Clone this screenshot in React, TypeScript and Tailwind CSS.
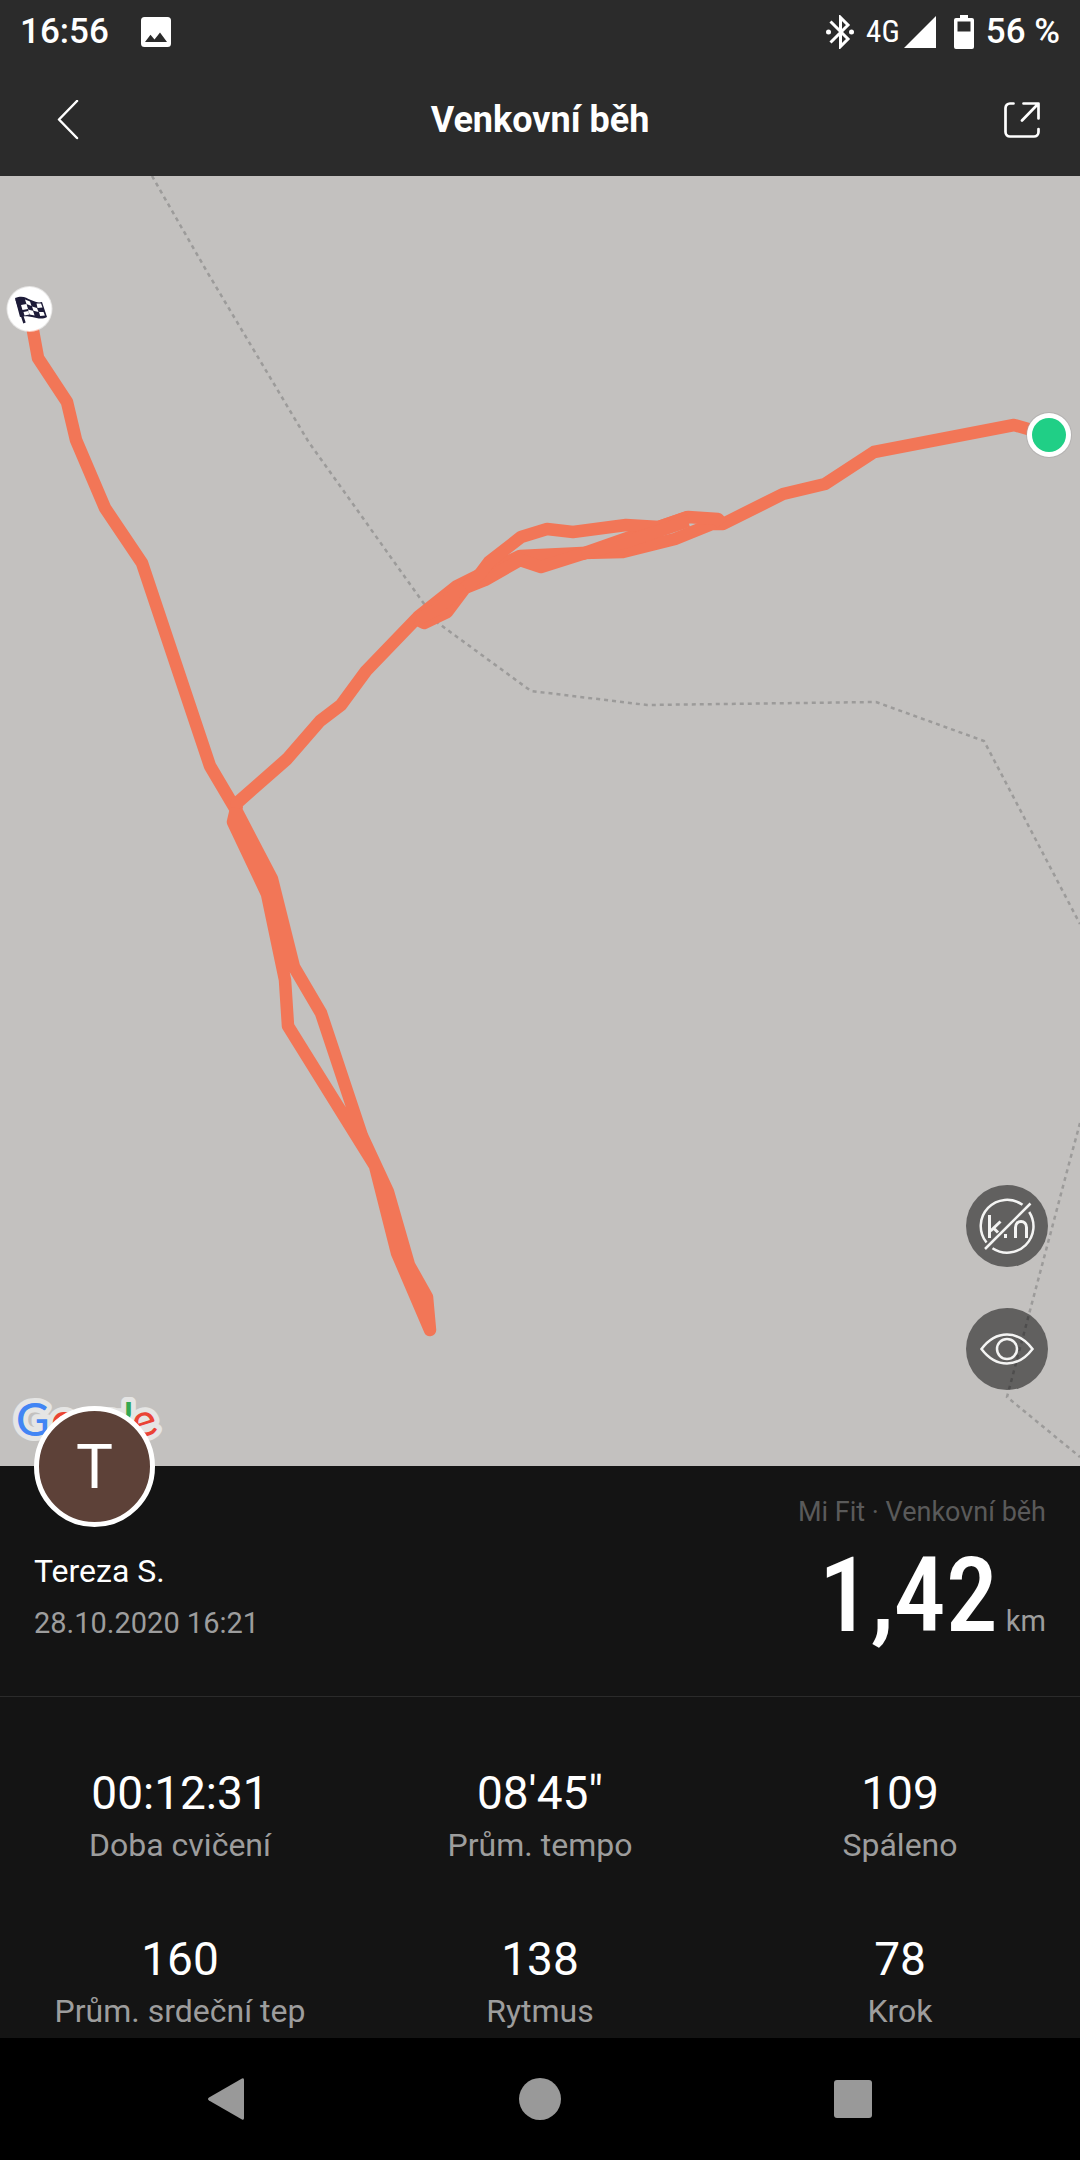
import type { ReactNode } from "react";

interface Stat {
  value: string;
  label: string;
}

const stats: Stat[] = [
  { value: "00:12:31", label: "Doba cvičení" },
  { value: "08'45\"", label: "Prům. tempo" },
  { value: "109", label: "Spáleno" },
  { value: "160", label: "Prům. srdeční tep" },
  { value: "138", label: "Rytmus" },
  { value: "78", label: "Krok" },
];

const StatusBar = () => (
  <div className="flex h-16 items-center justify-between px-5 text-[35px] font-medium">
    <div className="flex items-center gap-8">
      <span>16:56</span>
      <svg viewBox="0 0 30 30" className="size-[30px]" aria-hidden="true">
        <path
          fill="#fff"
          fillRule="evenodd"
          d="M3.500 0h23a3.500 3.500 0 0 1 3.500 3.500v23a3.500 3.500 0 0 1-3.500 3.500h-23a3.500 3.500 0 0 1-3.500-3.500v-23a3.500 3.500 0 0 1 3.500-3.500zM4 25h22l-7-9.500-5.500 7-4-4.800z"
        />
      </svg>
    </div>
    <div className="flex items-center">
      <svg viewBox="0 0 28 34" className="mr-3 h-[34px] w-7" aria-hidden="true">
        <path
          d="M4.500 6.500 22 24l-7.500 7.500V2.500L22 10 4.500 27.500"
          fill="none"
          stroke="#fff"
          strokeWidth="3"
        />
        <circle cx="2.500" cy="17" r="2.500" fill="#fff" />
        <circle cx="25.500" cy="17" r="2.500" fill="#fff" />
      </svg>
      <span className="mr-1 font-['Roboto_Condensed',Roboto,sans-serif] text-[31px] font-normal">
        4G
      </span>
      <svg viewBox="0 0 32 32" className="mr-[18px] size-8" aria-hidden="true">
        <path d="M32 0v32H0z" fill="#fff" />
      </svg>
      <svg viewBox="0 0 20 34" className="mr-3 h-[34px] w-5" aria-hidden="true">
        <path
          fill="#fff"
          fillRule="evenodd"
          d="M6 0h8v3h4a2 2 0 0 1 2 2v27a2 2 0 0 1-2 2H2a2 2 0 0 1-2-2V5a2 2 0 0 1 2-2h4zM3.500 6.500v10h13v-10z"
        />
      </svg>
      <span>56 %</span>
    </div>
  </div>
);

const TitleBar = () => (
  <header className="flex h-28 items-center justify-between px-10">
    <button type="button" aria-label="Zpět" className="flex h-14 w-14 items-center justify-center">
      <svg viewBox="0 0 22 40" className="h-10 w-[22px]" fill="none" aria-hidden="true">
        <path
          d="M20 1 2 19.500 20 38"
          stroke="#fff"
          strokeWidth="2.500"
          strokeLinecap="round"
          strokeLinejoin="round"
        />
      </svg>
    </button>
    <h1 className="text-[36px] font-bold">Venkovní běh</h1>
    <button type="button" aria-label="Sdílet" className="flex h-14 w-14 items-center justify-end">
      <svg viewBox="0 0 36 36" className="size-9" fill="none" aria-hidden="true">
        <path
          d="M9.500 1.500H6A4.500 4.500 0 0 0 1.500 6v24A4.500 4.500 0 0 0 6 34.500h24a4.500 4.500 0 0 0 4.500-4.500v-3M19.500 1.500h15v15M34 2 18 18.500"
          stroke="#fff"
          strokeWidth="2.700"
          strokeLinecap="round"
          strokeLinejoin="round"
        />
      </svg>
    </button>
  </header>
);

// Recorded GPS track, in map units
const route = [
  "M29 133L38 182L67 226L76 264L105 332L142 387L210 590L236 634L272 703L294 791L321 837L362 960L388 1016L409 1089L427 1121L430 1154L397 1077L375 990L288 850L285 804L267 718L233 646L237 629",
  "M236 632L237 627L287 583L320 545L341 529L366 495L418 441L457 410L481 398L520 380L582 377L623 376L675 363L712 348L723 348L783 318L825 308L874 276L1014 249L1049 259",
  "M722 348L718 343L688 341L659 351L582 378L541 391L520 384L485 404L465 412L447 436L424 447L416 443",
  "M465 412L480 398L489 386L521 361L547 353L573 356L626 349L659 351L688 341",
  "M582 378L626 366L688 345",
  "M418 443L436 434L462 412",
];

const paths = [
  "M152 0L206 94L308 265L422 425L438 447L531 515L647 529L876 526L984 565L1080 748",
  "M1080 947L1070 984L1007 1221L1080 1281",
];

const RouteMap = () => (
  <svg
    viewBox="0 0 1080 1290"
    preserveAspectRatio="xMidYMid slice"
    className="absolute inset-0 h-full w-full"
    role="img"
    aria-label="Trasa běhu"
  >
    <g fill="none" stroke="#9c9b9a" strokeWidth="2.500" strokeDasharray="4 4">
      {paths.map((d) => (
        <path key={d} d={d} />
      ))}
    </g>
    <g fill="none" stroke="#f27657" strokeWidth="12.500" strokeLinejoin="round">
      {route.map((d) => (
        <path key={d} d={d} />
      ))}
    </g>

    {/* Start */}
    <circle cx="1049" cy="259" r="23" fill="#a5a4a3" opacity="0.5" />
    <circle cx="1049" cy="259" r="22" fill="#fff" />
    <circle cx="1049" cy="259" r="17" fill="#20cf86" />

    {/* Finish */}
    <circle cx="29.500" cy="133" r="23" fill="#fff" opacity="0.6" />
    <circle cx="29.500" cy="133" r="22" fill="#fff" />
    <path d="M16.500 123l8 24" stroke="#1d1b38" strokeWidth="2.500" />
    <path d="M15 122c8-3 11 0 16 2s7 3 11 2l5 15c-5 3-10 1-15 0s-7-1-12 0z" fill="#1d1b38" />
    <path
      d="M25 123.500l5 2 1.500 4.500-5-2zM21 129l5.500-1 1.500 5-5.500 1zM32 130.500l5 1.500 1.500 4-5-1.200zM36.500 127.500l4.500 0 1.500 4-5 .5zM28 133.500l5 1.300 1.600 4.700-5-1zM23.500 136l4.800-1 1 3.500-4.800 1zM39 136l4.500 0 1.400 3.500-4.700 .5z"
      fill="#fff"
    />
  </svg>
);

const GoogleLogo = () => (
  <svg
    viewBox="0 0 160 60"
    className="absolute bottom-4 left-2.5 h-[60px] w-40 overflow-visible"
    aria-label="Google"
  >
    <g
      fontSize="46"
      fontWeight="500"
      fontFamily="Lato, sans-serif"
      stroke="#e5e5e4"
      strokeWidth="10"
      strokeLinejoin="round"
      paintOrder="stroke"
    >
      <text x="6 41 65 89 113" y="46">
        <tspan fill="#4285f4">G</tspan>
        <tspan fill="#ea4335">o</tspan>
        <tspan fill="#fbbc05">o</tspan>
        <tspan fill="#4285f4">g</tspan>
        <tspan fill="#34a853">l</tspan>
      </text>
      <text x="123" y="46" fill="#ea4335" transform="rotate(-18 135 36)">
        e
      </text>
    </g>
  </svg>
);

const MapButton = ({ label, children }: { label: string; children: ReactNode }) => (
  <button type="button" aria-label={label} className="size-[82px] rounded-full bg-black/50">
    <svg
      viewBox="0 0 82 82"
      className="size-full"
      fill="none"
      stroke="#f4f4f3"
      strokeWidth="2.500"
      aria-hidden="true"
    >
      {children}
    </svg>
  </button>
);

const MapView = () => (
  <section className="relative min-h-[640px] flex-1 bg-[#c3c1bf]">
    <RouteMap />
    <GoogleLogo />
    <div className="absolute right-8 bottom-19 flex flex-col gap-[41px]">
      <MapButton label="Skrýt kilometry">
        <path d="M56.500 19.800A26.300 26.300 0 0 0 20.500 57.500M26.500 63.200A26.300 26.300 0 0 0 63.200 27" />
        <path d="M19 64 64.500 18.500" />
        <path d="M23.500 30v23M34.500 36.500l-10 9.500M28 43.500l4 4" strokeWidth="3" />
        <path d="M39.500 49v4" strokeWidth="3" />
        <path d="M49.500 53V42.500c0-4 2.500-6 5.500-6s5.500 2 5.500 6V53" strokeWidth="3" />
      </MapButton>
      <MapButton label="Zobrazit mapu">
        <path d="M15.500 41C23 31 32 26.500 41 26.500S59 31 66.500 41C59 51 50 55.500 41 55.500S23 51 15.500 41z" />
        <circle cx="41" cy="41" r="10" />
      </MapButton>
    </div>
  </section>
);

const Summary = () => (
  <div className="flex justify-between border-b border-[#2b2b2b] px-[34px] pb-[53px]">
    <div>
      <div className="relative -mt-[60px] flex size-[121px] items-center justify-center rounded-full border-5 border-white bg-[#5d4138] text-[62px]">
        T
      </div>
      <p className="mt-6 text-[32px] leading-10">Tereza S.</p>
      <p className="mt-3 text-[29px] leading-10 text-[#9d9d9d]">28.10.2020 16:21</p>
    </div>
    <div className="pt-[26px] text-right leading-10">
      <p className="text-[27px] text-[#5a5a5a]">Mi Fit · Venkovní běh</p>
      <p className="mt-6 flex items-baseline justify-end gap-2 text-[29px] text-[#9d9d9d]">
        <span className="font-['Roboto_Condensed',Roboto,sans-serif] text-[104px] leading-20 font-medium text-white">
          1,42
        </span>
        km
      </p>
    </div>
  </div>
);

const StatGrid = () => (
  <dl className="grid grid-cols-3 gap-y-[66px] pt-[68px] pb-[7px] text-center">
    {stats.map((stat) => (
      <div key={stat.label} className="flex flex-col-reverse gap-1">
        <dt className="text-[32px] leading-10 text-[#9d9d9d]">{stat.label}</dt>
        <dd className="text-[46px] leading-14">{stat.value}</dd>
      </div>
    ))}
  </dl>
);

const NavBar = () => (
  <nav className="grid h-[122px] grid-cols-3 bg-black px-[70px]">
    <button type="button" aria-label="Zpět" className="flex items-center justify-center">
      <svg viewBox="0 0 42 42" className="size-[42px]" fill="#999" aria-hidden="true">
        <path d="M36 0.500q2-1 2 1.500v38q0 2.500-2 1.500L3 22.500q-2-1.500 0-3z" />
      </svg>
    </button>
    <button type="button" aria-label="Domů" className="flex items-center justify-center">
      <span className="size-[42px] rounded-full bg-[#999]" />
    </button>
    <button type="button" aria-label="Přehled" className="flex items-center justify-center">
      <span className="size-[38px] rounded-[3px] bg-[#999]" />
    </button>
  </nav>
);

const App = () => {
  return (
    <div className="flex min-h-screen flex-col bg-[#2b2b2b] font-[Roboto,sans-serif] text-white">
      <StatusBar />
      <TitleBar />
      <MapView />
      <main className="bg-[#141414]">
        <Summary />
        <StatGrid />
      </main>
      <NavBar />
    </div>
  );
};

export default App;
